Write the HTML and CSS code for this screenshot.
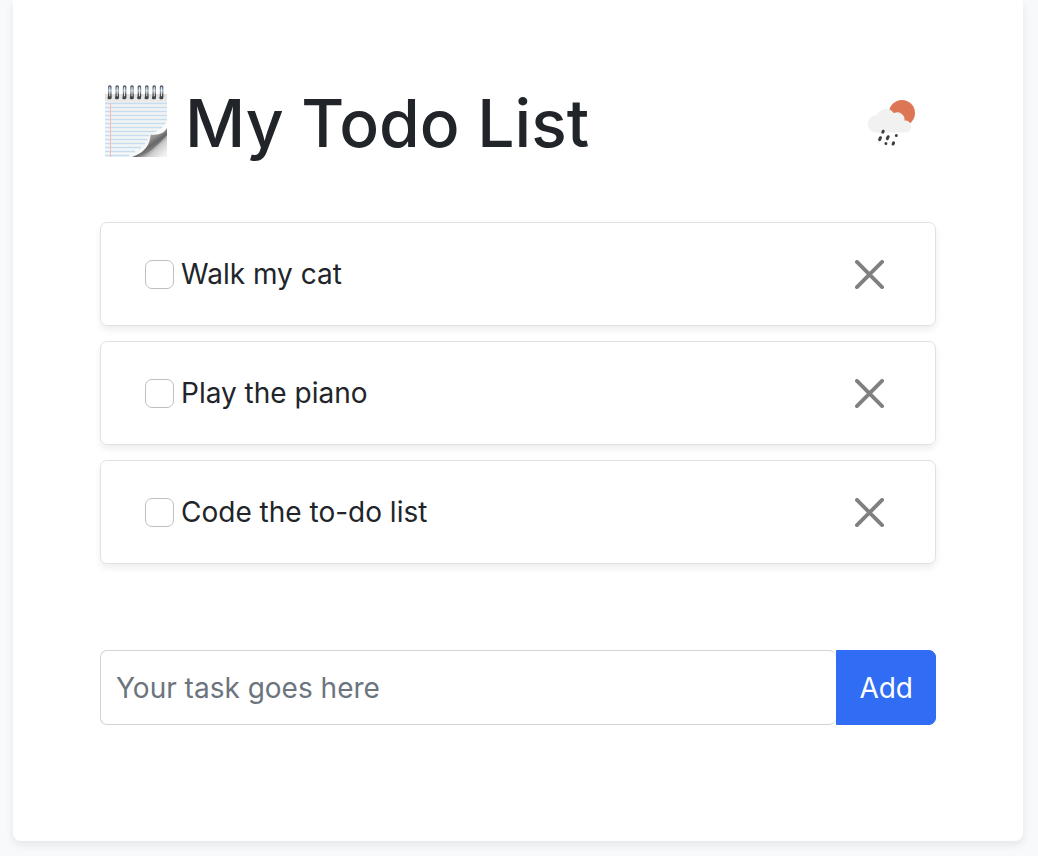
FILE: index.html
```html
<!DOCTYPE html>
<html lang="en">
<head>
<meta charset="utf-8">
<meta name="viewport" content="width=device-width, initial-scale=1">
<title>My Todo List</title>
<link rel="stylesheet" href="styles.css">
</head>
<body>
<main class="card">
  <header class="header">
    <svg class="notepad" viewBox="0 0 64 72" aria-hidden="true">
      <defs>
        <linearGradient id="paper" x1="0" y1="0" x2="0" y2="1">
          <stop offset="0" stop-color="#dedede"/><stop offset=".18" stop-color="#f3f3f2"/><stop offset="1" stop-color="#f5f7f8"/>
        </linearGradient>
        <linearGradient id="curl" gradientUnits="userSpaceOnUse" x1="45" y1="49" x2="54" y2="62">
          <stop offset="0" stop-color="#b0b0b0"/><stop offset=".35" stop-color="#8f8f8f"/><stop offset=".65" stop-color="#666"/><stop offset="1" stop-color="#8a8a8a"/>
        </linearGradient>
        <linearGradient id="under" gradientUnits="userSpaceOnUse" x1="50" y1="59" x2="60" y2="70">
          <stop offset="0" stop-color="#8a8a8a"/><stop offset=".4" stop-color="#cfcfcf"/><stop offset="1" stop-color="#f0f2f3"/>
        </linearGradient>
        <linearGradient id="ring" x1="0" y1="0" x2="0" y2="1">
          <stop offset="0" stop-color="#46505f"/><stop offset=".4" stop-color="#a9bbcc"/><stop offset=".7" stop-color="#555"/><stop offset="1" stop-color="#333"/>
        </linearGradient>
      </defs>
      <path d="M1 9h62v63H1z" fill="url(#paper)"/>
      <path d="M1 18.500h62M1 22.500h62M1 26.500h62M1 30.500h62M1 34.500h62M1 38.500h62M1 42.500h60M1 46.500h52M1 50.500h44M1 54.500h42M1 58.500h40M1 62.500h36M1 66.500h30M1 70.500h24" stroke="#c6ddef" stroke-width="1.400"/>
      <path d="M6.500 18v54" stroke="#f3bcb9" stroke-width="1"/>
      <path d="M63 48Q55 56 48 61Q43 69 34 72H63z" fill="url(#under)"/>
      <path d="M63 36Q59 45 46.500 49Q46 64 26 72Q37 69 45 60Q51 51 63 43z" fill="#fbfcfc"/>
      <path d="M63 43Q59 51 46.500 49.500Q46 66 28 72H34Q44 69 51 62Q57 57 63 50z" fill="url(#curl)"/>
      <g fill="#fff" stroke="url(#ring)" stroke-width="1.400">
        <rect x="4.700" y="1" width="2.200" height="12" rx="1.100"/><rect x="12.100" y="1" width="2.200" height="12" rx="1.100"/><rect x="19.500" y="1" width="2.200" height="12" rx="1.100"/><rect x="26.900" y="1" width="2.200" height="12" rx="1.100"/><rect x="34.300" y="1" width="2.200" height="12" rx="1.100"/><rect x="41.700" y="1" width="2.200" height="12" rx="1.100"/><rect x="49.100" y="1" width="2.200" height="12" rx="1.100"/><rect x="56.500" y="1" width="2.200" height="12" rx="1.100"/>
      </g>
      <path d="M5 12.800h1M12.400 12.800h1M19.800 12.800h1M27.200 12.800h1M34.600 12.800h1M42 12.800h1M49.400 12.800h1M56.800 12.800h1" stroke="#444" stroke-width="3" stroke-linecap="round"/>
    </svg>
    <h1 class="title">My Todo List</h1>
    <svg class="weather" viewBox="0 0 48 48" role="img" aria-label="Rain with sun">
      <circle cx="34" cy="14" r="13" fill="#dd7654"/>
      <path d="M8 33.500A8.600 8.600 0 0 1 9 16.300A9.600 9.600 0 0 1 26 14.200A7.200 7.200 0 0 1 36.500 21.500A6 6 0 1 1 38 33.500z" fill="#f1f1f1"/>
      <g stroke="#3d3d3d" stroke-width="3" stroke-linecap="round"><path d="M15.200 32.200l-.4 1M12.500 38.700l-.9 2M20.200 37.700l-.9 2M28.300 36.500v.1M17.900 44.500v.1M25.600 43.800l-.5 1.200"/></g>
    </svg>
  </header>

  <ul class="tasks">
    <li class="task">
      <input class="check" type="checkbox" id="task-1"><label class="label" for="task-1">Walk my cat</label>
      <button class="remove" type="button" aria-label="Remove Walk my cat"><svg class="cross" viewBox="0 0 30 30"><path d="M2 2l26 26M28 2L2 28"/></svg></button>
    </li>
    <li class="task">
      <input class="check" type="checkbox" id="task-2"><label class="label" for="task-2">Play the piano</label>
      <button class="remove" type="button" aria-label="Remove Play the piano"><svg class="cross" viewBox="0 0 30 30"><path d="M2 2l26 26M28 2L2 28"/></svg></button>
    </li>
    <li class="task">
      <input class="check" type="checkbox" id="task-3"><label class="label" for="task-3">Code the to-do list</label>
      <button class="remove" type="button" aria-label="Remove Code the to-do list"><svg class="cross" viewBox="0 0 30 30"><path d="M2 2l26 26M28 2L2 28"/></svg></button>
    </li>
  </ul>

  <form class="add-form">
    <input class="field" type="text" aria-label="New task" placeholder="Your task goes here">
    <button class="add" type="submit">Add</button>
  </form>
</main>
</body>
</html>
```
FILE: styles.css
```css
* {
  box-sizing: border-box;
}

body {
  margin: 0;
  background: #f8f9fa;
  color: #212529;
  font-family: Inter, "Liberation Sans", sans-serif;
  font-size: 28px;
  line-height: 44px;
}

.card {
  margin: 0 15px 15px 13px;
  padding: 80px 87px 116px;
  background: #fff;
  border-radius: 0 0 8px 8px;
  box-shadow: 0 4px 8px rgba(0, 0, 0, 0.08);
}

.header {
  display: flex;
  align-items: center;
  padding: 0 20px 0 4px;
  margin-bottom: 56px;
}

.notepad {
  width: 64px;
  height: 72px;
  margin: 0 17px 4px 0;
}

.title {
  flex: 1;
  margin: 0;
  font-size: 66px;
  font-weight: 500;
  line-height: 86px;
  white-space: nowrap;
}

.weather {
  width: 48px;
  height: 48px;
}

.tasks {
  display: grid;
  gap: 15px;
  margin: 0 0 86px;
  padding: 0;
  list-style: none;
}

.task {
  display: flex;
  align-items: center;
  padding: 29px 51px 29px 44px;
  border: 1px solid #dee2e6;
  border-radius: 7px;
  box-shadow: 0 4px 7px rgba(0, 0, 0, 0.07);
}

.check {
  appearance: none;
  width: 29px;
  height: 29px;
  margin: 0 7px 0 0;
  border: 1px solid #bfbfbf;
  border-radius: 7px;
  background: #fff;
}

.check:checked {
  background: #316cf4;
}

.label {
  flex: 1;
}

.remove {
  display: flex;
  padding: 0;
  border: 0;
  background: none;
  cursor: pointer;
}

.cross {
  width: 29px;
  height: 29px;
  fill: none;
  stroke: #808080;
  stroke-width: 4;
  stroke-linecap: round;
}

.add-form {
  display: flex;
}

.field,
.add {
  font: inherit;
  padding: 14px 15px;
  border: 1px solid #ced4da;
}

.field {
  flex: 1;
  min-width: 0;
  height: 75px;
  border-right: 0;
  border-radius: 7px;
  background: #fff;
}

.field::placeholder {
  color: #6c757d;
  opacity: 1;
}

.add {
  padding: 14px 22px;
  border-color: #316cf4;
  border-radius: 0 7px 7px 0;
  background: #316cf4;
  color: #fff;
}
```
